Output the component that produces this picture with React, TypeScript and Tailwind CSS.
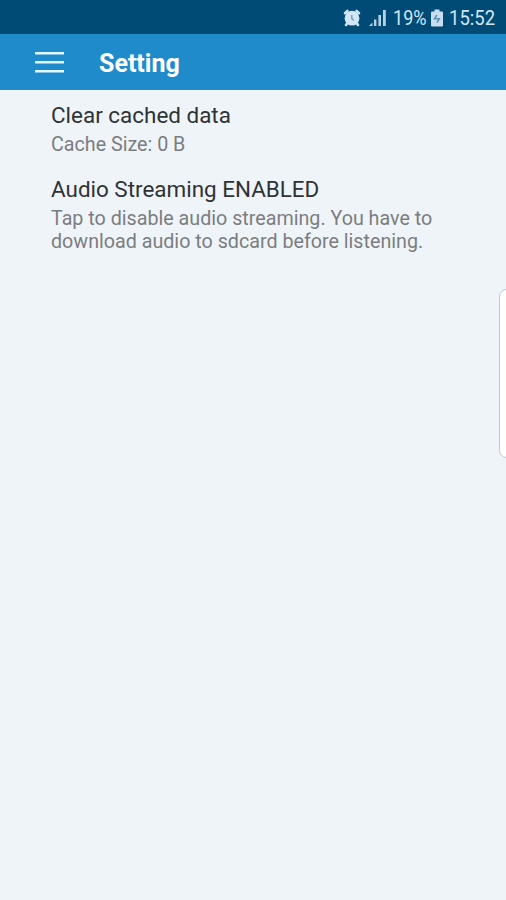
const SETTINGS = [
  {
    title: "Clear cached data",
    lines: ["Cache Size: 0 B"],
  },
  {
    title: "Audio Streaming ENABLED",
    lines: [
      "Tap to disable audio streaming. You have to",
      "download audio to sdcard before listening.",
    ],
  },
];

function AlarmIcon() {
  return (
    <svg width="18" height="18" viewBox="0 0 18 18" fill="none">
      <path
        d="M2 4.200 4.400 2M16 4.200 13.600 2M4.400 14 3 16M13.600 14 15 16"
        stroke="#d3e6f5"
        strokeWidth="2.6"
        strokeLinecap="round"
      />
      <circle cx="9" cy="9.2" r="7.4" fill="#d3e6f5" />
      <path d="M8.800 6v3.600l2 1.800" stroke="#6b9bbd" strokeWidth="1.3" />
    </svg>
  );
}

function SignalIcon() {
  return (
    <svg width="18" height="18" viewBox="0 0 18 18" fill="#b7d0e4">
      <path d="M0 17 3.500 13.500V17z" />
      <rect x="5" y="10.5" width="2.4" height="6.5" />
      <rect x="9.4" y="6" width="2.6" height="11" />
      <rect x="14" y="1" width="2.8" height="16" />
    </svg>
  );
}

function BatteryIcon() {
  return (
    <svg width="12" height="18" viewBox="0 0 12 18">
      <path
        d="M3.5 0.5h5v2H11a1 1 0 0 1 1 1v13a1 1 0 0 1-1 1H1a1 1 0 0 1-1-1v-13a1 1 0 0 1 1-1h2.500z"
        fill="#c8dff0"
      />
      <path
        d="M5.800 6 3.500 9.800h4.800L6 13.500"
        fill="none"
        stroke="#5c8fb5"
        strokeWidth="1.5"
      />
    </svg>
  );
}

function StatusBar() {
  return (
    <div className="flex h-[34px] items-center bg-[#004b76] pt-px pl-[343px] text-[21px] text-[#d3e6f5]">
      <AlarmIcon />
      <div className="ml-2 w-6">
        <SignalIcon />
      </div>
      <div className="w-[38px] pt-0.5">
        <span className="inline-block origin-left scale-x-[0.86] whitespace-nowrap">19%</span>
      </div>
      <BatteryIcon />
      <div className="ml-1.5 pt-0.5">
        <span className="inline-block origin-left scale-x-[0.88] whitespace-nowrap">15:52</span>
      </div>
    </div>
  );
}

function AppBar() {
  return (
    <header className="flex h-14 items-center bg-[#208bcb] pl-[35px]">
      <button aria-label="Menu" className="flex h-[21px] w-[29px] flex-col justify-between">
        <span className="h-[3px] w-full border-b border-[#7fc4e8] bg-[#e2f8ff]" />
        <span className="h-[3px] w-full border-b border-[#7fc4e8] bg-[#e2f8ff]" />
        <span className="h-[3px] w-full border-b border-[#7fc4e8] bg-[#e2f8ff]" />
      </button>
      <h1 className="ml-[35px] pt-[3px] text-[25px] font-bold text-white">Setting</h1>
    </header>
  );
}

export default function App() {
  return (
    <div className="relative h-[900px] w-[506px] overflow-hidden bg-[#eff4f9] font-['Roboto',sans-serif]">
      <StatusBar />
      <AppBar />
      <main className="flex flex-col gap-[19px] pt-[11px] pl-[51px]">
        {SETTINGS.map((item) => (
          <section key={item.title}>
            <h2 className="mb-[3px] text-[22.45px] leading-[29px] whitespace-nowrap text-[#303234]">
              {item.title}
            </h2>
            {item.lines.map((line) => (
              <p key={line} className="text-[19.7px] leading-[23px] whitespace-nowrap text-[#7b7d80]">
                {line}
              </p>
            ))}
          </section>
        ))}
      </main>
      {/* edge panel handle */}
      <div className="absolute top-[289px] -right-2 h-[169px] w-[15px] rounded-lg border border-[#c3c8cc] bg-white" />
    </div>
  );
}
